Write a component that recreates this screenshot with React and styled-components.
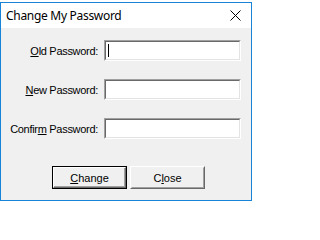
import React from "react";
import styled, { createGlobalStyle } from "styled-components";

const GlobalStyle = createGlobalStyle`
  html, body {
    margin: 0;
    padding: 0;
    background: #ffffff;
  }
  body {
    padding-top: 2px;
  }
`;

const Window = styled.div`
  width: 250px;
  height: 197px;
  border: 1px solid #1883d7;
  display: flex;
  flex-direction: column;
  background: #f0f0f0;
`;

const TitleBar = styled.div`
  height: 25px;
  background: #ffffff;
  display: flex;
  align-items: center;
  justify-content: space-between;
  padding: 0 10px 0 5px;
`;

const Title = styled.span`
  font-family: "Noto Sans", "Open Sans", sans-serif;
  font-size: 12px;
  letter-spacing: -0.3px;
  color: #000000;
  margin-top: -1px;
`;

const CloseGlyph = styled.svg`
  width: 11px;
  height: 11px;
  display: block;
`;

const Body = styled.div`
  flex: 1;
  display: flex;
  flex-direction: column;
  padding: 12px 11px 0 0;
`;

const Fields = styled.div`
  display: grid;
  grid-template-columns: 97px 137px;
  column-gap: 6px;
  row-gap: 18px;
  align-items: center;
`;

const Label = styled.label`
  font-family: "Liberation Sans", Arial, sans-serif;
  font-size: 11px;
  letter-spacing: -0.3px;
  color: #000000;
  text-align: right;
  white-space: nowrap;
`;

const Key = styled.u`
  text-decoration: underline;
  text-underline-offset: 1px;
`;

const Field = styled.div`
  height: 21px;
  box-sizing: border-box;
  background: #ffffff;
  border-top: 1px solid #a0a0a0;
  border-left: 1px solid #a0a0a0;
  border-bottom: 1px solid #ffffff;
  border-right: 1px solid #ffffff;
  display: flex;
`;

const FieldInner = styled.div`
  flex: 1;
  border-top: 1px solid #696969;
  border-left: 1px solid #696969;
  border-bottom: 1px solid #e3e3e3;
  border-right: 1px solid #e3e3e3;
  display: flex;
  align-items: center;
  padding-left: 2px;
`;

const Caret = styled.span`
  width: 1px;
  height: 13px;
  background: #000000;
`;

const Buttons = styled.div`
  display: flex;
  gap: 3px;
  padding-left: 51px;
  margin-top: 27px;
`;

const Button = styled.div`
  width: 75px;
  height: 23px;
  box-sizing: border-box;
  background: #f0f0f0;
  border: 1px solid ${(p) => (p.$default ? "#000000" : "#ffffff")};
  border-bottom-color: ${(p) => (p.$default ? "#000000" : "#696969")};
  border-right-color: ${(p) => (p.$default ? "#000000" : "#696969")};
  display: flex;
  font-family: "Liberation Sans", Arial, sans-serif;
  font-size: 11px;
  color: #000000;
`;

const ButtonFace = styled.div`
  flex: 1;
  display: flex;
  align-items: center;
  justify-content: center;
  border-top: 1px solid ${(p) => (p.$default ? "#ffffff" : "#f0f0f0")};
  border-left: 1px solid ${(p) => (p.$default ? "#ffffff" : "#f0f0f0")};
  border-bottom: 1px solid ${(p) => (p.$default ? "#696969" : "#a0a0a0")};
  border-right: 1px solid ${(p) => (p.$default ? "#696969" : "#a0a0a0")};
  box-shadow: ${(p) => (p.$default ? "inset -1px -1px 0 #a0a0a0" : "none")};
`;

const fields = [
  { pre: "", key: "O", post: "ld Password:", caret: true },
  { pre: "", key: "N", post: "ew Password:" },
  { pre: "Confir", key: "m", post: " Password:" },
];

export default function App() {
  return (
    <>
      <GlobalStyle />
      <Window>
        <TitleBar>
          <Title>Change My Password</Title>
          <CloseGlyph viewBox="0 0 11 11">
            <path d="M0.5 0.5 L10.5 10.5 M10.5 0.5 L0.5 10.5" stroke="#000" strokeWidth="1" />
          </CloseGlyph>
        </TitleBar>
        <Body>
          <Fields>
            {fields.map((f) => (
              <React.Fragment key={f.post}>
                <Label>
                  {f.pre}
                  <Key>{f.key}</Key>
                  {f.post}
                </Label>
                <Field>
                  <FieldInner>{f.caret && <Caret />}</FieldInner>
                </Field>
              </React.Fragment>
            ))}
          </Fields>
          <Buttons>
            <Button $default>
              <ButtonFace $default>
                <span>
                  <Key>C</Key>hange
                </span>
              </ButtonFace>
            </Button>
            <Button>
              <ButtonFace>
                <span>
                  C<Key>l</Key>ose
                </span>
              </ButtonFace>
            </Button>
          </Buttons>
        </Body>
      </Window>
    </>
  );
}
